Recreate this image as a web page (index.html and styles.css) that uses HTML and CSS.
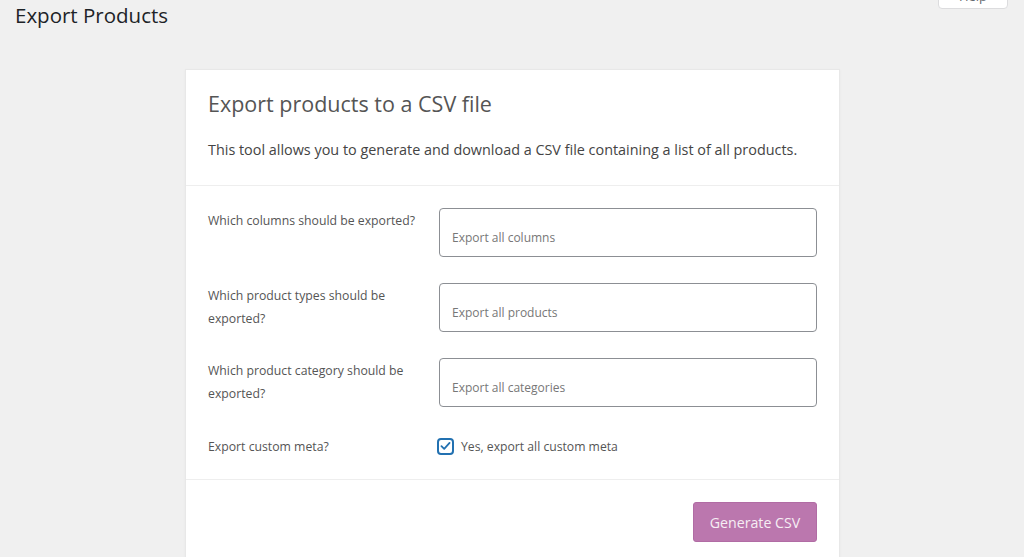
FILE: index.html
```html
<!DOCTYPE html>
<html lang="en">
<head>
  <meta charset="utf-8"/>
  <title>Export Products</title>
  <link rel="stylesheet" href="styles.css">
</head>
<body>

  <!-- Onglet d'aide en haut à droite -->
  <div class="screen-meta">
    <button class="screen-meta-link">Help</button>
  </div>

  <div class="wrap">
    <h1 class="page-title">Export Products</h1>

    <div class="exporter-card">
      <header class="exporter-head">
        <h2>Export products to a CSV file</h2>
        <p>This tool allows you to generate and download a CSV file containing a list of all products.</p>
      </header>

      <section class="exporter-form">
        <div class="form-row">
          <label class="row-label">Which columns should be exported?</label>
          <input class="select-box" type="text" placeholder="Export all columns">
        </div>
        <div class="form-row">
          <label class="row-label">Which product types should be exported?</label>
          <input class="select-box" type="text" placeholder="Export all products">
        </div>
        <div class="form-row">
          <label class="row-label">Which product category should be exported?</label>
          <input class="select-box" type="text" placeholder="Export all categories">
        </div>
        <div class="form-row check-row">
          <span class="row-label">Export custom meta?</span>
          <label class="check-label">
            <span class="check-box">
              <svg viewBox="0 0 16 16" width="14" height="14"><path d="M3 8.2 L6.4 11.5 L13 4.2" fill="none" stroke="#2271b1" stroke-width="2.2" stroke-linecap="round" stroke-linejoin="round"/></svg>
            </span>
            Yes, export all custom meta
          </label>
        </div>
      </section>

      <footer class="exporter-actions">
        <button class="btn-generate">Generate CSV</button>
      </footer>
    </div>
  </div>

</body>
</html>
```

FILE: styles.css
```css
/* -------------------- Base -------------------- */
* { box-sizing: border-box; }
html, body {
  margin: 0;
  padding: 0;
  background: #f0f0f0;
  font-family: "Segoe UI", "Open Sans", sans-serif;
  color: #3c434a;
  overflow: hidden;
}

/* -------------------- Onglet aide -------------------- */
.screen-meta {
  position: absolute;
  top: -22px;
  right: 16px;
}
.screen-meta-link {
  width: 70px;
  height: 31px;
  background: #fff;
  border: 1px solid #dcdcde;
  border-radius: 0 0 4px 4px;
  font-family: inherit;
  font-size: 13px;
  color: #646970;
  padding-top: 6px;
}

/* -------------------- Page -------------------- */
.wrap {
  padding: 0 15px;
}
.page-title {
  margin: 0;
  padding-top: 1px;
  font-size: 20.5px;
  font-weight: 400;
  line-height: 29px;
  color: #1d2327;
}

/* -------------------- Carte export -------------------- */
.exporter-card {
  width: 655px;
  margin: 39px auto 0 170px;
  background: #fff;
  border: 1px solid #e8e8e8;
  box-shadow: 0 1px 3px rgba(0,0,0,.04);
  height: 520px;
}
.exporter-head {
  padding: 19px 22px 24px;
  border-bottom: 1px solid #eee;
}
.exporter-head h2 {
  margin: 0;
  font-size: 21.5px;
  font-weight: 400;
  line-height: 30px;
  color: #555;
}
.exporter-head p {
  margin: 20px 0 0;
  font-size: 14.4px;
  line-height: 22px;
  color: #444;
  white-space: nowrap;
}

/* -------------------- Formulaire -------------------- */
.exporter-form {
  padding: 22px 22px 21px 21px;
  display: flex;
  flex-direction: column;
  gap: 26px;
  border-bottom: 1px solid #eee;
}
.form-row {
  display: grid;
  grid-template-columns: 232px 1fr;
  align-items: start;
}
.row-label {
  padding-top: 1px;
  padding-left: 1px;
  padding-right: 12px;
  font-size: 12.25px;
  line-height: 23px;
  color: #555;
}
.select-box {
  height: 49px;
  width: 100%;
  padding: 9px 12px 0;
  border: 1px solid #8c8f94;
  border-radius: 4px;
  font-family: inherit;
  font-size: 12px;
  color: #3c434a;
  background: #fff;
}
.select-box::placeholder { color: #777; }

.check-row { align-items: center; margin-top: 1px; }
.check-label {
  display: flex;
  align-items: center;
  gap: 7px;
  margin-left: -2px;
  font-size: 12.2px;
  color: #555;
}
.check-box {
  width: 17px;
  height: 17px;
  border: 2px solid #2271b1;
  border-radius: 4px;
  display: flex;
  align-items: center;
  justify-content: center;
}

/* -------------------- Actions -------------------- */
.exporter-actions {
  display: flex;
  justify-content: flex-end;
  padding: 22px 22px;
}
.btn-generate {
  width: 124px;
  height: 40px;
  background: #bb77ae;
  border: 1px solid #b16ca4;
  border-radius: 3px;
  color: #f6eef4;
  font-family: inherit;
  font-size: 14.2px;
}
```
